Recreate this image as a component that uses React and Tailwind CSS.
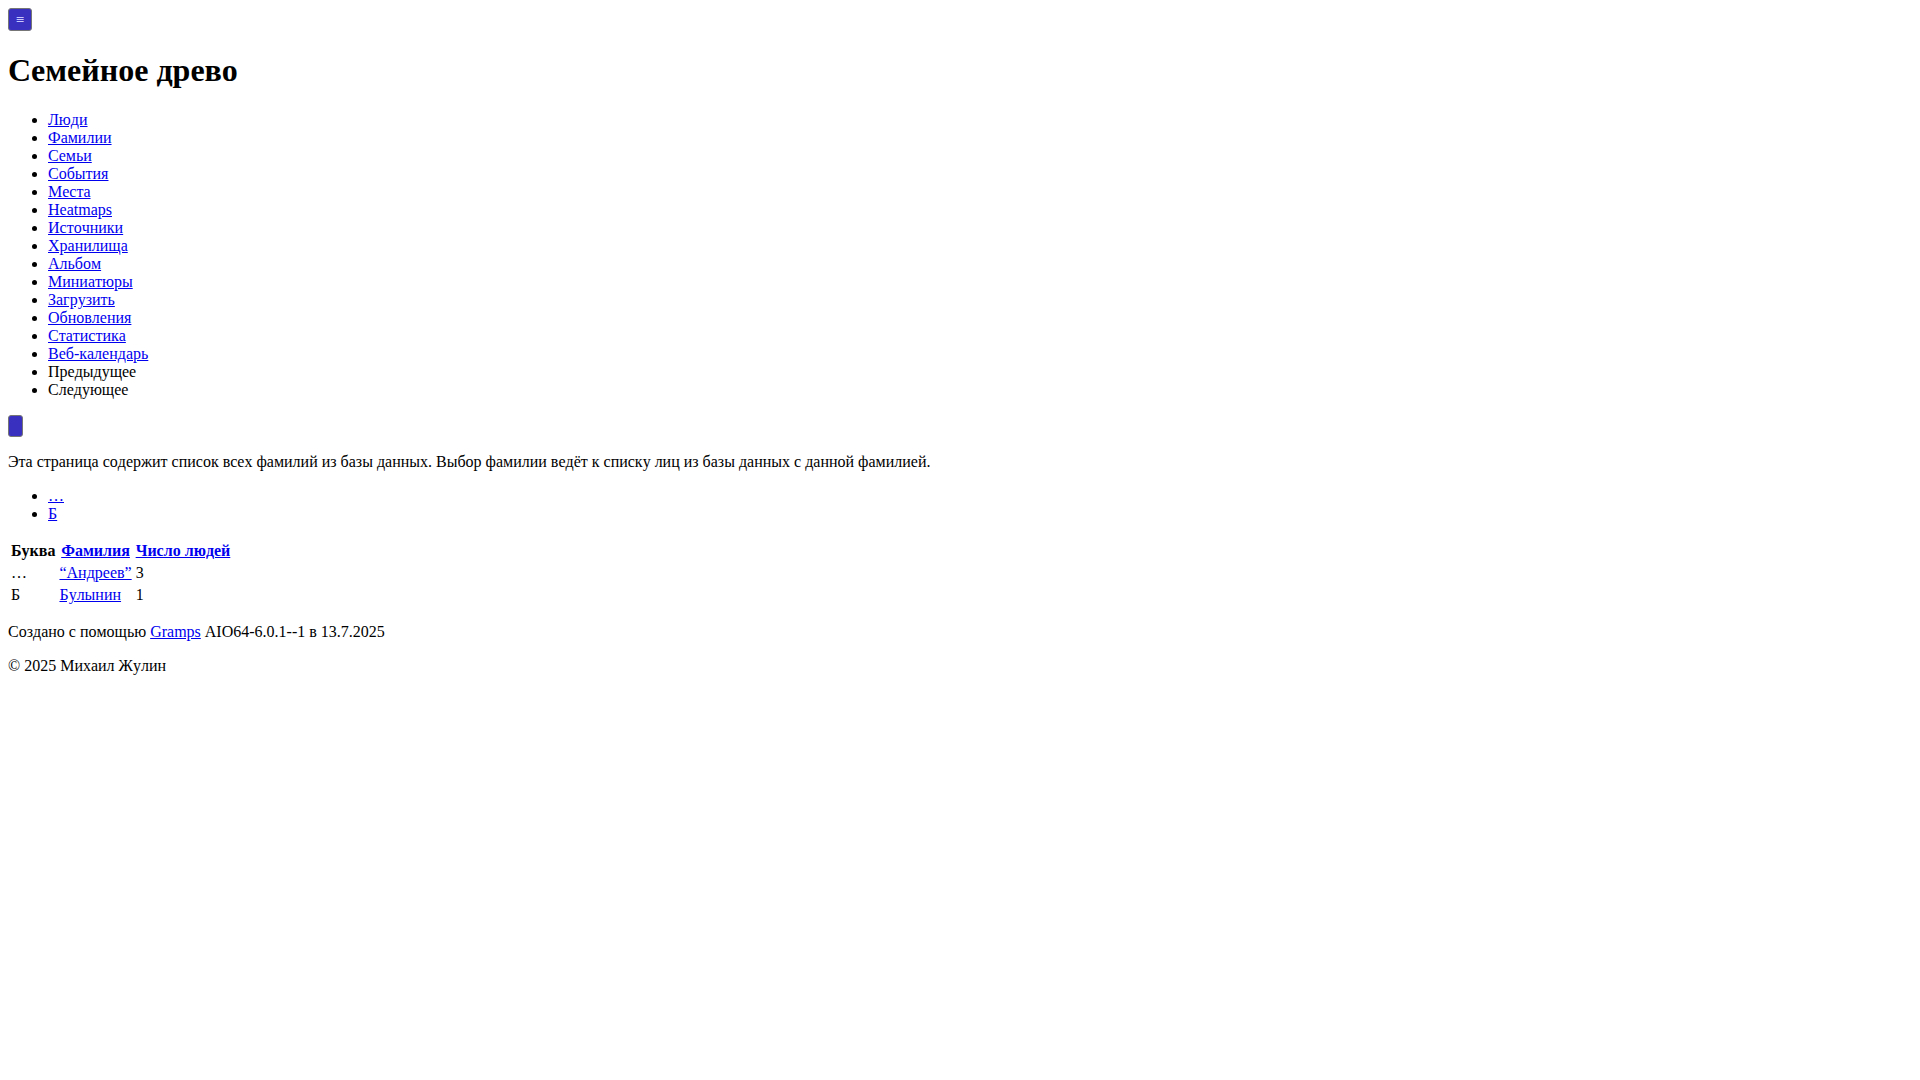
import React from "react";

const navLinks = [
  "Люди",
  "Фамилии",
  "Семьи",
  "События",
  "Места",
  "Heatmaps",
  "Источники",
  "Хранилища",
  "Альбом",
  "Миниатюры",
  "Загрузить",
  "Обновления",
  "Статистика",
  "Веб-календарь",
];

const rows = [
  { letter: "…", name: "“Андреев”", count: 3 },
  { letter: "Б", name: "Булынин", count: 1 },
];

const link = "text-[#0000ee] underline";

export default function App() {
  return (
    <div
      className="min-h-screen bg-white p-2 text-base leading-[normal] text-black [font-kerning:none] [text-rendering:optimizeSpeed]"
      style={{ fontFamily: '"Liberation Serif", "Times New Roman", serif' }}
    >
      {/* menu toggle */}
      <button className="flex h-[23px] w-[24px] items-center justify-center rounded-[3px] border border-[#767676] bg-[#3a30c0] text-[11px] leading-none text-[#c8c8ff] font-['DejaVu_Sans',sans-serif]">
        ≡
      </button>

      <h1 className="my-[21.44px] text-[32px] font-bold">Семейное древо</h1>

      <ul className="my-4 list-disc pl-10">
        {navLinks.map((item) => (
          <li key={item}>
            <a href="#" className={link}>
              {item}
            </a>
          </li>
        ))}
        <li>Предыдущее</li>
        <li>Следующее</li>
      </ul>

      <button className="block h-[22px] w-[15px] rounded-[3px] border border-[#767676] bg-[#3a30c0]" />

      <p className="my-4">
        Эта страница содержит список всех фамилий из базы данных. Выбор фамилии
        ведёт к списку лиц из базы данных с данной фамилией.
      </p>

      <ul className="my-4 list-disc pl-10">
        <li>
          <a href="#" className={link}>
            …
          </a>
        </li>
        <li>
          <a href="#" className={link}>
            Б
          </a>
        </li>
      </ul>

      <table className="border-separate border-spacing-[2px]">
        <thead>
          <tr>
            <th className="p-px text-center font-bold">Буква</th>
            <th className="p-px text-center font-bold">
              <a href="#" className={link}>
                Фамилия
              </a>
            </th>
            <th className="p-px text-center font-bold">
              <a href="#" className={link}>
                Число людей
              </a>
            </th>
          </tr>
        </thead>
        <tbody>
          {rows.map((r) => (
            <tr key={r.name}>
              <td className="p-px">{r.letter}</td>
              <td className="p-px">
                <a href="#" className={link}>
                  {r.name}
                </a>
              </td>
              <td className="p-px">{r.count}</td>
            </tr>
          ))}
        </tbody>
      </table>

      <p className="my-4">
        Создано с помощью{" "}
        <a href="#" className={link}>
          Gramps
        </a>{" "}
        AIO64-6.0.1--1 в 13.7.2025
      </p>
      <p className="my-4">© 2025 Михаил Жулин</p>
    </div>
  );
}
